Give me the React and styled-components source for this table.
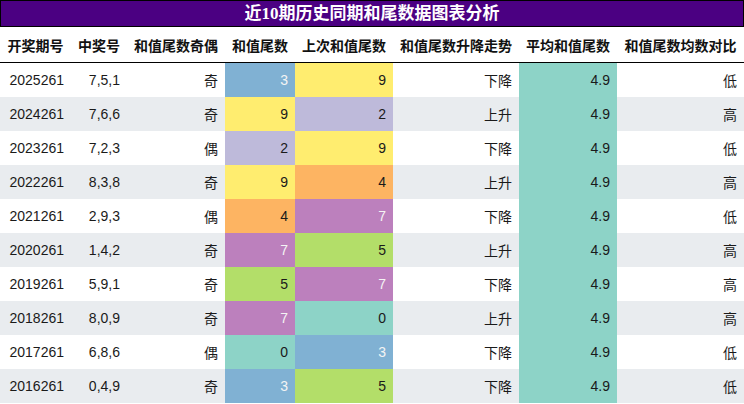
import React from "react";
import styled, { createGlobalStyle } from "styled-components";

const Global = createGlobalStyle`
  html, body { margin: 0; padding: 0; background: #fff; }
  body { font-family: "Liberation Sans", "Noto Sans CJK SC", sans-serif; }
`;

const Page = styled.div`
  width: 744px;
`;

const Title = styled.div`
  height: 25px;
  border: 1px solid #000;
  background: #4b0082;
  color: #fff;
  text-align: center;
  font: bold 17px/25px "Liberation Serif", "Noto Sans CJK SC", serif;
`;

const Grid = styled.div`
  display: grid;
  grid-template-columns: 71px 56px 98px 70px 98px 126px 98px 127px;
  grid-template-rows: 36px;
  grid-auto-rows: 34px;
`;

const HeadCell = styled.div`
  border-bottom: 1px solid #000;
  display: flex;
  align-items: center;
  justify-content: center;
  font-weight: bold;
  font-size: 14px;
  color: #111;
  font-family: "Noto Sans CJK SC", sans-serif;
  white-space: nowrap;
`;

const Cell = styled.div`
  display: flex;
  align-items: center;
  justify-content: flex-end;
  padding: 0 7px;
  font-size: 14px;
  color: ${(p) => (p.$light ? "#f4f4f4" : "#1a1a1a")};
  background: ${(p) => p.$bg || (p.$alt ? "#e9ecef" : "#fff")};
  white-space: nowrap;
`;

const palette = {
  0: "#8dd3c7",
  2: "#bebada",
  3: "#80b1d3",
  4: "#fdb462",
  5: "#b3de69",
  7: "#bc80bd",
  9: "#ffed6f",
};
const lightText = { 3: true, 7: true };

const headers = [
  "开奖期号",
  "中奖号",
  "和值尾数奇偶",
  "和值尾数",
  "上次和值尾数",
  "和值尾数升降走势",
  "平均和值尾数",
  "和值尾数均数对比",
];

const rows = [
  ["2025261", "7,5,1", "奇", 3, 9, "下降", "低"],
  ["2024261", "7,6,6", "奇", 9, 2, "上升", "高"],
  ["2023261", "7,2,3", "偶", 2, 9, "下降", "低"],
  ["2022261", "8,3,8", "奇", 9, 4, "上升", "高"],
  ["2021261", "2,9,3", "偶", 4, 7, "下降", "低"],
  ["2020261", "1,4,2", "奇", 7, 5, "上升", "高"],
  ["2019261", "5,9,1", "奇", 5, 7, "下降", "高"],
  ["2018261", "8,0,9", "奇", 7, 0, "上升", "高"],
  ["2017261", "6,8,6", "偶", 0, 3, "下降", "低"],
  ["2016261", "0,4,9", "奇", 3, 5, "下降", "低"],
];

export default function App() {
  return (
    <Page>
      <Global />
      <Title>近10期历史同期和尾数据图表分析</Title>
      <Grid>
        {headers.map((h) => (
          <HeadCell key={h}>{h}</HeadCell>
        ))}
        {rows.map((r, i) => {
          const alt = i % 2 === 1;
          return (
            <React.Fragment key={r[0]}>
              <Cell $alt={alt}>{r[0]}</Cell>
              <Cell $alt={alt}>{r[1]}</Cell>
              <Cell $alt={alt}>{r[2]}</Cell>
              <Cell $bg={palette[r[3]]} $light={lightText[r[3]]}>{r[3]}</Cell>
              <Cell $bg={palette[r[4]]} $light={lightText[r[4]]}>{r[4]}</Cell>
              <Cell $alt={alt}>{r[5]}</Cell>
              <Cell $bg="#8dd3c7">4.9</Cell>
              <Cell $alt={alt}>{r[6]}</Cell>
            </React.Fragment>
          );
        })}
      </Grid>
    </Page>
  );
}
